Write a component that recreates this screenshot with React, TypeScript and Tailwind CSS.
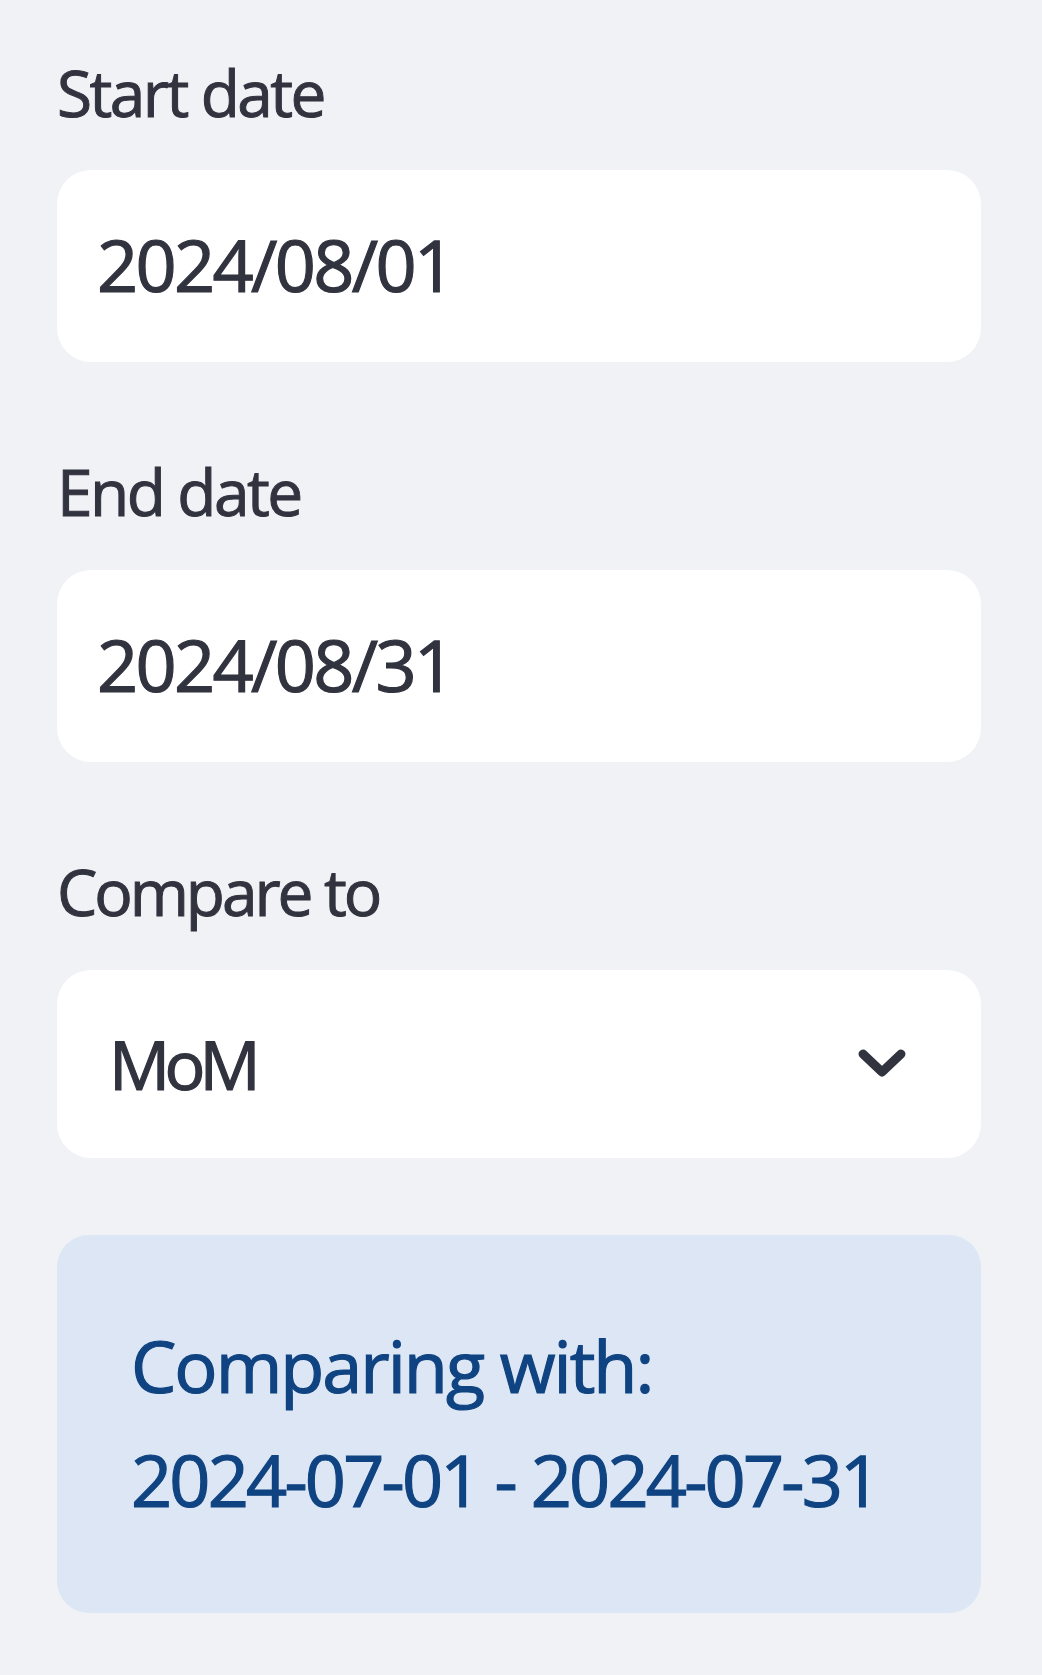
import { ReactNode } from "react";

const font = { fontFamily: "'Open Sans', 'Noto Sans', sans-serif" };

function FieldLabel({ children, tight }: { children: ReactNode; tight?: boolean }) {
  return (
    <div
      className={
        tight
          ? "h-[76px] text-[64px] leading-[76px] tracking-[-0.048em] text-[#31333f] whitespace-nowrap [-webkit-text-stroke:1px_#31333f]"
          : "h-[76px] text-[64px] leading-[76px] tracking-[-0.04em] text-[#31333f] whitespace-nowrap [-webkit-text-stroke:1px_#31333f]"
      }
    >
      {children}
    </div>
  );
}

function DateInput({ value }: { value: string }) {
  return (
    <div className="h-[192px] rounded-[34px] bg-white flex items-center pl-[40px] pb-[4px]">
      <span className="text-[72px] leading-[100px] tracking-[-0.037em] text-[#31333f] [-webkit-text-stroke:1.2px_#31333f]">
        {value}
      </span>
    </div>
  );
}

export default function App() {
  return (
    <div className="min-h-screen w-full bg-[#f0f2f6] pl-[57px] pr-[61px] pt-[55px]" style={font}>
      <div className="flex flex-col">
        {/* Start */}
        <FieldLabel>Start date</FieldLabel>
        <div className="mt-[39px]">
          <DateInput value="2024/08/01" />
        </div>

        {/* End */}
        <div className="mt-[92px]">
          <FieldLabel>End date</FieldLabel>
        </div>
        <div className="mt-[40px]">
          <DateInput value="2024/08/31" />
        </div>

        {/* Compare */}
        <div className="mt-[92px]">
          <FieldLabel tight>Compare to</FieldLabel>
        </div>
        <div className="mt-[40px] h-[188px] rounded-[34px] bg-white flex items-center justify-between pl-[52px] pr-[75px]">
          <span className="text-[68px] leading-[100px] tracking-[-0.085em] text-[#31333f] [-webkit-text-stroke:1.2px_#31333f]">
            MoM
          </span>
          <svg width="48" height="30" viewBox="0 0 48 30" fill="none">
            <polyline
              points="5,5 24,23 43,5"
              stroke="#31333f"
              strokeWidth="9"
              strokeLinecap="round"
              strokeLinejoin="round"
            />
          </svg>
        </div>

        {/* Info */}
        <div className="mt-[77px] rounded-[32px] bg-[#dde6f4] pl-[74px] pr-[40px] pt-[73px] pb-[77px] text-[#0f4381] [-webkit-text-stroke:1.2px_#0f4381]">
          <div className="text-[72px] leading-[114px] tracking-[-0.028em] whitespace-nowrap">Comparing with:</div>
          <div className="text-[72px] leading-[114px] tracking-[-0.039em] whitespace-nowrap">2024-07-01 - 2024-07-31</div>
        </div>
      </div>
    </div>
  );
}
